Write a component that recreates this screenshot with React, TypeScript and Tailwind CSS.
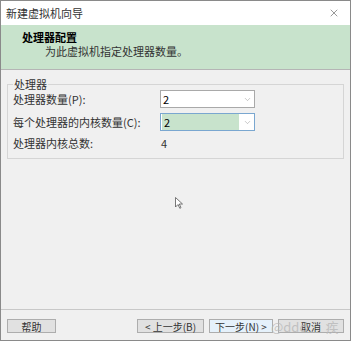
import { ChevronDown, X } from 'lucide-react'

const font = { fontFamily: '"Microsoft YaHei", "Noto Sans CJK SC", sans-serif' }

function Combo({ value, active }: { value: string; active?: boolean }) {
  return (
    <div
      className={`flex h-[18px] w-[95px] items-center border ${
        active ? 'border-[#7aa7d0]' : 'border-[#a9a9a9]'
      } bg-white`}
    >
      <div className={`flex h-full flex-1 items-center pl-[2px] text-[11px] text-black ${active ? 'm-px bg-[#c8e3cc]' : ''}`}>
        {value}
      </div>
      <div className="flex w-[14px] items-center justify-center">
        <ChevronDown size={9} strokeWidth={1.2} className="text-[#888]" />
      </div>
    </div>
  )
}

function Btn({ label, className = '' }: { label: string; className?: string }) {
  return (
    <div
      className={`flex h-[14px] items-center justify-center border border-[#adadad] bg-[#e1e1e1] text-[10px] text-[#333] ${className}`}
    >
      {label}
    </div>
  )
}

export default function App() {
  return (
    <div
      style={font}
      className="relative flex h-[341px] w-[351px] flex-col border border-[#8a8a8a] bg-[#f0f0f0] text-[11px] text-[#222]"
    >
      <div className="flex h-[24px] shrink-0 items-center justify-between bg-white pl-[5px] pr-[10px]">
        <span className="text-[11px] text-[#333]">新建虚拟机向导</span>
        <X size={12} strokeWidth={1} className="text-[#333]" />
      </div>
      <div className="flex h-[45px] shrink-0 flex-col border-b border-[#b5b5b5] bg-[#c8e3cc] pt-[5px]">
        <div className="pl-[21px] text-[11px] font-bold leading-[14px] text-black">处理器配置</div>
        <div className="pl-[44px] text-[11px] leading-[14px] text-[#333]">为此虚拟机指定处理器数量。</div>
      </div>
      <div className="flex-1 px-[6px] pt-[8px]">
        <fieldset className="border border-[#d5d5d5] px-[5px] pb-[8px]">
          <legend className="px-[1px] text-[11px] leading-[12px] text-[#333]">处理器</legend>
          <div className="flex flex-col gap-[5px]">
            <div className="flex items-center">
              <span className="w-[147px] text-[#333]">处理器数量(P):</span>
              <Combo value="2" />
            </div>
            <div className="flex items-center">
              <span className="w-[147px] text-[#333]">每个处理器的内核数量(C):</span>
              <Combo value="2" active />
            </div>
            <div className="flex h-[14px] items-center">
              <span className="w-[148px] text-[#333]">处理器内核总数:</span>
              <span className="text-[#333]">4</span>
            </div>
          </div>
        </fieldset>
      </div>
      <div className="flex h-[31px] shrink-0 items-center border-t border-[#c8c8c8] px-[6px] pt-[2px]">
        <Btn label="帮助" className="w-[49px]" />
        <div className="flex-1" />
        <Btn label="< 上一步(B)" className="w-[67px]" />
        <Btn label="下一步(N) >" className="ml-[5px] w-[64px] border-[#0078d7] bg-[#e5f1fb]" />
        <Btn label="取消" className="ml-[5px] w-[66px]" />
      </div>
      <div className="pointer-events-none absolute left-[270px] top-[316px] text-[13px] text-[#b8b8b8]/80">
        @ddd<span className="ml-[18px]">疾</span>
      </div>
      <svg className="absolute left-[174px] top-[196px]" width="8" height="12" viewBox="0 0 8 12">
        <path d="M0.5 0.5 L0.5 10 L3 7.5 L4.8 11.3 L6 10.7 L4.3 7 L7.5 7 Z" fill="white" stroke="#555" strokeWidth="0.8" />
      </svg>
    </div>
  )
}
